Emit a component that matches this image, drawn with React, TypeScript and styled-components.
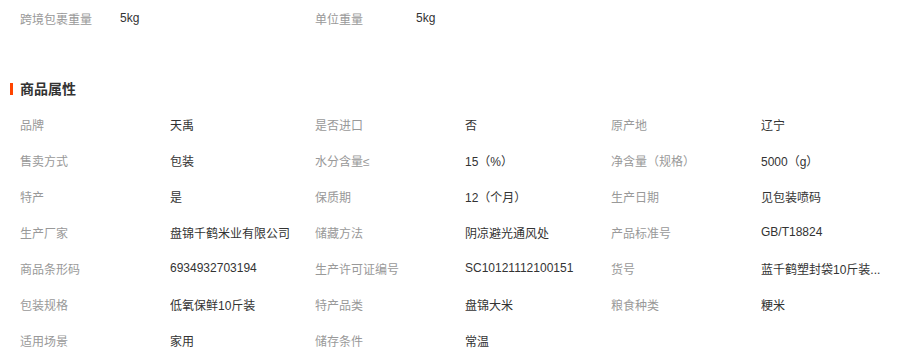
import React from "react";
import styled, { createGlobalStyle } from "styled-components";

const Global = createGlobalStyle`
  html, body { margin: 0; padding: 0; background: #fff; }
  body { font-family: "Liberation Sans", Arial, "Noto Sans CJK SC", sans-serif; font-size: 12px; color: #333; }
`;

const Page = styled.div`
  width: 901px;
  padding-left: 20px;
  box-sizing: border-box;
`;

const TopRow = styled.div`
  display: grid;
  grid-template-columns: 295px 296px 296px;
  height: 36px;
  align-items: center;
`;

const Cell = styled.div`
  display: flex;
  align-items: center;
  height: 36px;
`;

const Label = styled.span<{ $w: number }>`
  width: ${(p) => p.$w}px;
  flex: none;
  color: #999;
  white-space: nowrap;
`;

const Value = styled.span`
  width: 124px;
  color: #333;
  white-space: nowrap;
  overflow: hidden;
  text-overflow: ellipsis;
`;

const Heading = styled.h3`
  position: relative;
  margin: 43px 0 7px;
  font-size: 14px;
  font-weight: bold;
  line-height: 20px;
  height: 20px;
  color: #333;
  &::before {
    content: "";
    position: absolute;
    left: -10px;
    top: 4px;
    width: 3px;
    height: 12px;
    background: #ff4400;
  }
`;

const Grid = styled.div`
  display: grid;
  grid-template-columns: 295px 296px 296px;
`;

const attrs: [string, string][] = [
  ["品牌", "天禹"],
  ["是否进口", "否"],
  ["原产地", "辽宁"],
  ["售卖方式", "包装"],
  ["水分含量≤", "15（%）"],
  ["净含量（规格）", "5000（g）"],
  ["特产", "是"],
  ["保质期", "12（个月）"],
  ["生产日期", "见包装喷码"],
  ["生产厂家", "盘锦千鹤米业有限公司"],
  ["储藏方法", "阴凉避光通风处"],
  ["产品标准号", "GB/T18824"],
  ["商品条形码", "6934932703194"],
  ["生产许可证编号", "SC10121112100151"],
  ["货号", "蓝千鹤塑封袋10斤装..."],
  ["包装规格", "低氧保鲜10斤装"],
  ["特产品类", "盘锦大米"],
  ["粮食种类", "粳米"],
  ["适用场景", "家用"],
  ["储存条件", "常温"],
];

export default function App() {
  return (
    <Page>
      <Global />
      <TopRow>
        <Cell>
          <Label $w={100}>跨境包裹重量</Label>
          <Value>5kg</Value>
        </Cell>
        <Cell>
          <Label $w={101}>单位重量</Label>
          <Value>5kg</Value>
        </Cell>
      </TopRow>
      <Heading>商品属性</Heading>
      <Grid>
        {attrs.map(([k, v]) => (
          <Cell key={k}>
            <Label $w={150}>{k}</Label>
            <Value>{v}</Value>
          </Cell>
        ))}
      </Grid>
    </Page>
  );
}
